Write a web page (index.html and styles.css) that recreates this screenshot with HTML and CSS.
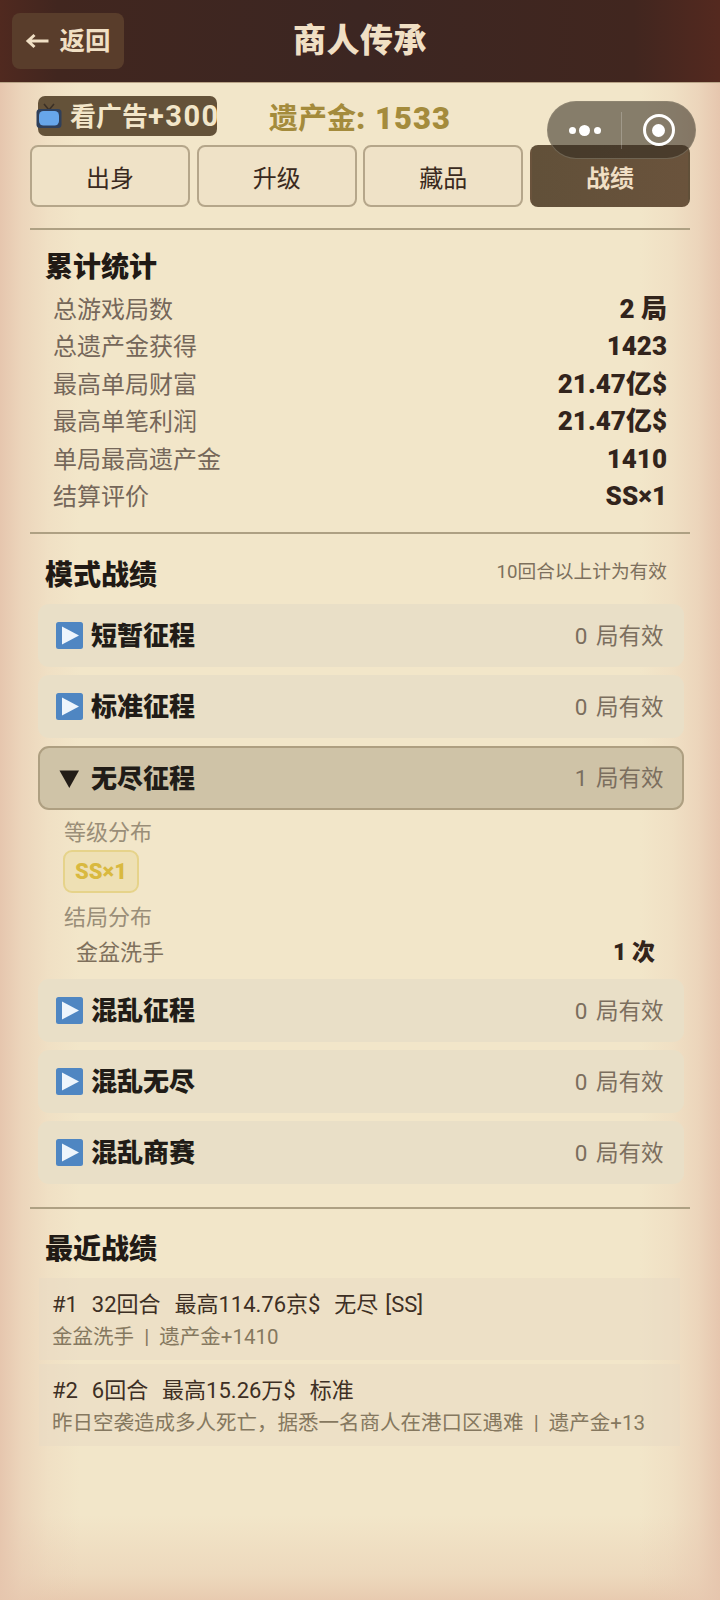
FILE: index.html
```html
<!DOCTYPE html>
<html lang="zh">
<head>
<meta charset="utf-8">
<title>商人传承</title>
<link rel="stylesheet" href="styles.css">
</head>
<body>
<div class="app">
  <header class="header">
    <button class="back">
      <svg class="back-arrow" viewBox="0 0 24 16" aria-hidden="true"><path d="M23 8H3M9 2L2.500 8L9 14" fill="none" stroke="#f0dfc4" stroke-width="3"/></svg>
      <span>返回</span>
    </button>
    <h1 class="header-title">商人传承</h1>
  </header>

  <div class="capsule">
    <div class="capsule-dots"><i class="dot"></i><i class="dot dot-big"></i><i class="dot"></i></div>
    <div class="capsule-sep"></div>
    <div class="capsule-target"><div class="target-ring"><i class="target-core"></i></div></div>
  </div>

  <main class="content">
    <div class="topline">
      <div class="ad">
        <svg class="ad-icon" viewBox="0 0 26 26" aria-hidden="true">
          <path d="M8 1l5 6 5-6" fill="none" stroke="#3b3026" stroke-width="1.6"/>
          <rect x="0.5" y="6" width="25" height="19" rx="3.5" fill="#2f3f5a"/>
          <rect x="3" y="8" width="20" height="14.5" rx="4.5" fill="#67a6ea"/>
        </svg>
        <span class="ad-text">看广告<span class="ad-num">+300</span></span>
      </div>
      <div class="legacy">遗产金<span class="legacy-num">: 1533</span></div>
    </div>

    <nav class="tabs">
      <div class="tab">出身</div>
      <div class="tab">升级</div>
      <div class="tab">藏品</div>
      <div class="tab tab-active">战绩</div>
    </nav>

    <section class="section section-stats">
      <h2 class="section-title">累计统计</h2>
      <div class="stat"><span class="stat-label">总游戏局数</span><span class="stat-value">2 局</span></div>
      <div class="stat"><span class="stat-label">总遗产金获得</span><span class="stat-value">1423</span></div>
      <div class="stat"><span class="stat-label">最高单局财富</span><span class="stat-value">21.47亿$</span></div>
      <div class="stat"><span class="stat-label">最高单笔利润</span><span class="stat-value">21.47亿$</span></div>
      <div class="stat"><span class="stat-label">单局最高遗产金</span><span class="stat-value">1410</span></div>
      <div class="stat"><span class="stat-label">结算评价</span><span class="stat-value">SS×1</span></div>
    </section>

    <section class="section section-modes">
      <div class="section-head">
        <h2 class="section-title">模式战绩</h2>
        <span class="section-note">10回合以上计为有效</span>
      </div>
      <div class="modes">
        <div class="mode">
          <svg class="play" viewBox="0 0 27 27" aria-hidden="true"><rect width="27" height="27" rx="2.5" fill="#4f86c2"/><path d="M6 4.5L23 13.5L6 22.5Z" fill="#eef5fc"/></svg>
          <span class="mode-name">短暂征程</span><span class="mode-count">0 局有效</span>
        </div>
        <div class="mode">
          <svg class="play" viewBox="0 0 27 27" aria-hidden="true"><rect width="27" height="27" rx="2.5" fill="#4f86c2"/><path d="M6 4.5L23 13.5L6 22.5Z" fill="#eef5fc"/></svg>
          <span class="mode-name">标准征程</span><span class="mode-count">0 局有效</span>
        </div>
        <div class="mode mode-open">
          <svg class="play" viewBox="0 0 27 27" aria-hidden="true"><path d="M3.500 5.500H23L13.300 23Z" fill="#231d18"/></svg>
          <span class="mode-name">无尽征程</span><span class="mode-count">1 局有效</span>
        </div>
        <div class="detail">
          <div class="detail-label">等级分布</div>
          <div class="chip">SS×1</div>
          <div class="detail-label detail-label-end">结局分布</div>
          <div class="ending"><span class="ending-name">金盆洗手</span><span class="ending-value">1 次</span></div>
        </div>
        <div class="mode">
          <svg class="play" viewBox="0 0 27 27" aria-hidden="true"><rect width="27" height="27" rx="2.5" fill="#4f86c2"/><path d="M6 4.5L23 13.5L6 22.5Z" fill="#eef5fc"/></svg>
          <span class="mode-name">混乱征程</span><span class="mode-count">0 局有效</span>
        </div>
        <div class="mode">
          <svg class="play" viewBox="0 0 27 27" aria-hidden="true"><rect width="27" height="27" rx="2.5" fill="#4f86c2"/><path d="M6 4.5L23 13.5L6 22.5Z" fill="#eef5fc"/></svg>
          <span class="mode-name">混乱无尽</span><span class="mode-count">0 局有效</span>
        </div>
        <div class="mode">
          <svg class="play" viewBox="0 0 27 27" aria-hidden="true"><rect width="27" height="27" rx="2.5" fill="#4f86c2"/><path d="M6 4.5L23 13.5L6 22.5Z" fill="#eef5fc"/></svg>
          <span class="mode-name">混乱商赛</span><span class="mode-count">0 局有效</span>
        </div>
      </div>
    </section>

    <section class="section section-recent">
      <h2 class="section-title">最近战绩</h2>
      <div class="recent">
        <div class="recent-main">#1&nbsp; 32回合&nbsp; 最高114.76京$&nbsp; 无尽 [SS]</div>
        <div class="recent-sub">金盆洗手 &nbsp;|&nbsp; 遗产金+1410</div>
      </div>
      <div class="recent">
        <div class="recent-main">#2&nbsp; 6回合&nbsp; 最高15.26万$&nbsp; 标准</div>
        <div class="recent-sub">昨日空袭造成多人死亡，据悉一名商人在港口区遇难 &nbsp;|&nbsp; 遗产金+13</div>
      </div>
    </section>
  </main>
</div>
</body>
</html>
```

FILE: styles.css
```css
* { box-sizing: border-box; }
html, body { margin: 0; padding: 0; }
body {
  font-family: "Roboto", "Noto Sans CJK SC", sans-serif;
  color: #3a2a20;
}
.app {
  position: relative;
  width: 720px;
  height: 1600px;
  overflow: hidden;
  background-color: #f2e6c9;
  background-image:
    linear-gradient(to right,
      #e6c6ae 0,
      rgba(232,202,178,0.6) 22px,
      rgba(232,202,178,0.22) 48px,
      rgba(232,202,178,0) 80px,
      rgba(232,202,178,0) 640px,
      rgba(232,202,178,0.22) 672px,
      rgba(232,202,178,0.6) 698px,
      #e6c6ae 100%),
    linear-gradient(to top,
      #e8cbb0 0,
      rgba(232,203,176,0.5) 25px,
      rgba(232,203,176,0) 85px);
}
.header {
  position: relative;
  height: 83px;
  padding: 13px 12px;
  background: linear-gradient(to right, #50291f 0, #41261f 8%, #3c2622 50%, #41261f 88%, #54291f 100%);
  border-bottom: 1px solid #b9a487;
}
.back {
  display: flex;
  align-items: center;
  justify-content: center;
  gap: 9px;
  width: 112px;
  height: 56px;
  padding: 0;
  border: 0;
  border-radius: 8px;
  background: #593d2b;
  color: #f0dfc4;
  font-family: inherit;
  font-size: 25.500px;
  line-height: 56px;
  font-weight: 700;
}
.back-arrow { flex: none; width: 25px; height: 16px; }
.header-title {
  position: absolute;
  top: 0;
  left: 0;
  right: 0;
  margin: 0;
  line-height: 82px;
  text-align: center;
  font-size: 33px;
  letter-spacing: 0.5px;
  font-weight: 900;
  color: #f0dfc4;
}

.capsule {
  position: absolute;
  left: 547px;
  top: 101px;
  width: 149px;
  height: 58px;
  display: flex;
  align-items: center;
  border-radius: 29px;
  background: rgba(50, 42, 32, 0.56);
  border: 1px solid rgba(150, 140, 120, 0.5);
  z-index: 2;
}
.capsule-dots {
  flex: none;
  width: 73px;
  display: flex;
  align-items: center;
  justify-content: center;
  gap: 3.5px;
}
.dot { width: 7px; height: 7px; border-radius: 50%; background: #fff; }
.dot-big { width: 11px; height: 11px; }
.capsule-sep { flex: none; width: 1px; height: 37px; background: rgba(255,255,255,0.22); }
.capsule-target {
  flex: none;
  width: 73px;
  display: flex;
  align-items: center;
  justify-content: center;
}
.target-ring {
  width: 32px;
  height: 32px;
  display: flex;
  align-items: center;
  justify-content: center;
  border: 3px solid #fff;
  border-radius: 50%;
}
.target-core { width: 13px; height: 13px; border-radius: 50%; background: #fff; }

.content { padding: 13px 30px 0; }
.topline {
  display: flex;
  align-items: center;
  height: 40px;
}
.ad {
  display: flex;
  align-items: center;
  flex: none;
  width: 179px;
  height: 40px;
  margin-left: 8px;
  border-radius: 7px;
  background: #645239;
}
.ad-icon { flex: none; width: 26px; height: 26px; margin: 0 8px 0 -2px; }
.ad-text {
  flex: 1;
  overflow: hidden;
  white-space: nowrap;
  font-size: 26px;
  font-weight: 700;
  color: #f2e6c9;
  line-height: 40px;
}
.ad-num { font-size: 29px; letter-spacing: 1.5px; }
.legacy {
  margin: 6px 0 0 52px;
  font-size: 29px;
  line-height: 40px;
  font-weight: 700;
  color: #a48b3c;
  white-space: nowrap;
}
.legacy-num { font-size: 31px; letter-spacing: 1px; font-weight: 900; }
.tabs {
  display: grid;
  grid-template-columns: repeat(4, 1fr);
  gap: 6.5px;
  margin-top: 9px;
}
.tab {
  height: 62px;
  display: flex;
  align-items: center;
  justify-content: center;
  border: 2px solid #b5a68a;
  border-radius: 8px;
  background: #efe2c7;
  font-size: 24px;
  color: #3a2a20;
}
.tab-active {
  border-color: transparent;
  background: linear-gradient(to right, #615039, #6a533c);
  color: #f0dfc4;
  font-weight: 700;
}

.section { border-top: 2px solid #aea083; }
.section-stats { margin-top: 21px; padding: 20px 0 17px; }
.section-modes { padding: 24px 0 23px; }
.section-recent { padding: 23px 0 0; }
.section-title {
  margin: 0;
  padding-left: 15px;
  font-size: 28px;
  line-height: 36px;
  font-weight: 900;
  color: #211a15;
}
.section-stats .section-title { margin-bottom: 5px; }
.section-head {
  display: flex;
  align-items: center;
  justify-content: space-between;
  padding-right: 23px;
  margin-bottom: 10px;
}
.section-note { font-size: 18.700px; line-height: 28px; padding-bottom: 8px; color: #7d705d; }
.stat {
  display: flex;
  align-items: baseline;
  justify-content: space-between;
  height: 37.4px;
  padding: 0 23px 0 23px;
}
.stat-label { font-size: 24px; line-height: 37.4px; color: #75675a; }
.stat-value { font-size: 26px; line-height: 37.4px; font-weight: 900; color: #32241c; }

.modes { display: flex; flex-direction: column; gap: 8px; }
.mode {
  display: flex;
  align-items: center;
  height: 63px;
  margin: 0 6.5px 0 7.5px;
  padding: 0 20px 0 18.500px;
  border-radius: 11px;
  background: #e9dfc7;
}
.mode-open {
  height: 64px;
  padding: 0 18px 0 16.500px;
  border: 2px solid #ae9f81;
  background: #cfc3a7;
}
.play { flex: none; width: 27px; height: 27px; margin-right: 8px; }
.mode-name { flex: 1; padding-bottom: 4px; font-size: 26px; font-weight: 900; color: #211c17; }
.mode-count { padding-bottom: 4px; font-size: 22.500px; word-spacing: 3px; color: #7b6e5e; }

.detail { padding: 3px 0 0 34px; height: 153px; }
.detail-label { font-size: 22px; line-height: 24px; color: #9a8e78; }
.detail-label-end { margin-top: 13px; }
.chip {
  display: flex;
  align-items: center;
  justify-content: center;
  width: 76px;
  height: 43px;
  margin: 5px 0 0 -1px;
  border: 2px solid #e6d38a;
  border-radius: 9px;
  background: #eee0b4;
  color: #d9b93f;
  font-size: 22px;
  font-weight: 900;
}
.ending {
  display: flex;
  justify-content: space-between;
  align-items: baseline;
  height: 30px;
  margin-top: 8px;
  padding: 0 35px 0 12px;
}
.ending-name { font-size: 22px; line-height: 30px; color: #7e705c; }
.ending-value { font-size: 23px; line-height: 30px; font-weight: 900; color: #32241c; }

.recent {
  margin: 10px 10px 0 9px;
  padding: 10px 13px 8px;
  background: rgba(231, 218, 196, 0.5);
}
.recent + .recent { margin-top: 4px; }
.recent-main { font-size: 22px; word-spacing: 1.5px; line-height: 34px; color: #3d2f24; white-space: nowrap; }
.recent-sub { font-size: 20.500px; line-height: 30px; color: #85785f; white-space: nowrap; }
```
